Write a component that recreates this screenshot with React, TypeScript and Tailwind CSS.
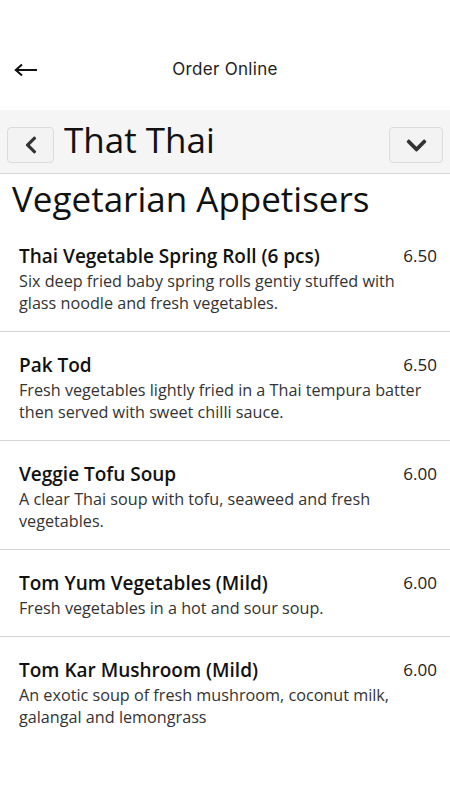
import * as React from "react";
import { FaChevronLeft, FaChevronDown } from "react-icons/fa";

type Dish = {
  name: string;
  desc: string;
  price: string;
};

const dishes: Dish[] = [
  {
    name: "Thai Vegetable Spring Roll (6 pcs)",
    desc: "Six deep fried baby spring rolls gentiy stuffed with glass noodle and fresh vegetables.",
    price: "6.50",
  },
  {
    name: "Pak Tod",
    desc: "Fresh vegetables lightly fried in a Thai tempura batter then served with sweet chilli sauce.",
    price: "6.50",
  },
  {
    name: "Veggie Tofu Soup",
    desc: "A clear Thai soup with tofu, seaweed and fresh vegetables.",
    price: "6.00",
  },
  {
    name: "Tom Yum Vegetables (Mild)",
    desc: "Fresh vegetables in a hot and sour soup.",
    price: "6.00",
  },
  {
    name: "Tom Kar Mushroom (Mild)",
    desc: "An exotic soup of fresh mushroom, coconut milk, galangal and lemongrass",
    price: "6.00",
  },
];

function BackArrow() {
  return (
    <svg width="24" height="14" viewBox="0 0 24 14" fill="none">
      <path d="M1.5 7H23" stroke="#111" strokeWidth="2" />
      <path d="M8 1.5L1.8 7L8 12.5" stroke="#111" strokeWidth="2" />
    </svg>
  );
}

export default function App() {
  return (
    <div className="min-h-[800px] w-[450px] bg-white font-['Open_Sans',sans-serif] text-[#111]">
      <header className="flex h-[110px] items-start pt-[58px]">
        <div className="relative flex h-[24px] w-full items-center justify-center">
          <button className="absolute left-[14px] top-[5px]">
            <BackArrow />
          </button>
          <span className="font-['Inter',sans-serif] text-[17px] tracking-[0.3px] text-[#222]">Order Online</span>
        </div>
      </header>

      <div className="flex items-start border-b border-[#d6d6d6] bg-[#f5f5f5] px-[7px] pt-[17px] pb-[10px]">
        <button className="flex h-[36px] w-[47px] items-center justify-center rounded-[4px] border border-[#dcdcdc] bg-[#f3f3f3] text-[#333]">
          <FaChevronLeft size={20} />
        </button>
        <h1 className="ml-[10px] -mt-[5px] flex-1 text-[35px] leading-[36px] text-[#111]">That Thai</h1>
        <button className="flex h-[36px] w-[54px] items-center justify-center rounded-[4px] border border-[#dcdcdc] bg-[#f3f3f3] text-[#333]">
          <FaChevronDown size={23} />
        </button>
      </div>

      <h2 className="px-[12px] pt-[3px] pb-[2px] text-[35px] leading-[44px] text-[#111]">Vegetarian Appetisers</h2>

      <ul>
        {dishes.map((d, i) => (
          <li
            key={d.name}
            className={
              "pl-[19px] pr-[13px] pt-[21px] pb-[17px] " +
              (i < dishes.length - 1 ? "border-b border-[#d4d4d4]" : "")
            }
          >
            <div className="flex items-start justify-between gap-3">
              <div className="text-[19px] font-semibold leading-[24px] text-[#111]">{d.name}</div>
              <div className="text-[17px] leading-[24px] text-[#222]">{d.price}</div>
            </div>
            <p className="mt-[2px] pr-[7px] text-[16.2px] leading-[22px] text-[#333]">{d.desc}</p>
          </li>
        ))}
      </ul>
    </div>
  );
}
